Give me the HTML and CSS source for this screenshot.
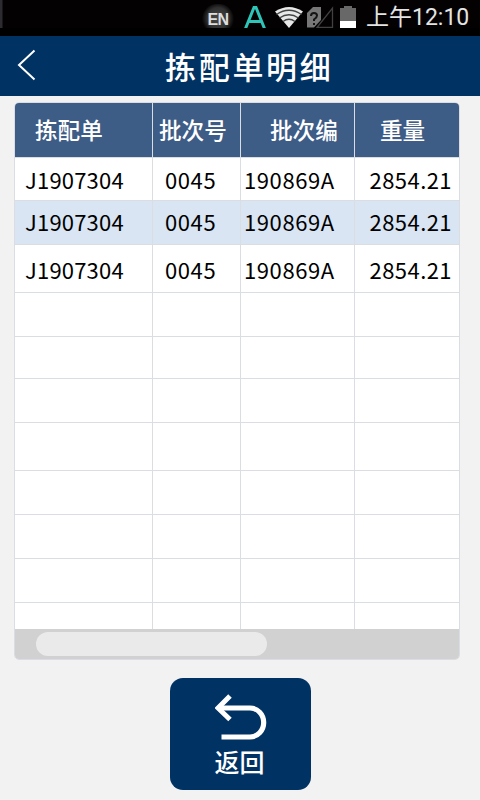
FILE: index.html
```html
<!DOCTYPE html>
<html lang="zh-CN">
<head>
<meta charset="utf-8">
<title>拣配单明细</title>
<link rel="stylesheet" href="styles.css">
</head>
<body>
<div class="status">
  <span class="lang">EN</span>
  <svg class="ime" width="22" height="22" viewBox="0 0 22 22"><path d="M1.500 22.500 10 1.500h2l8.500 21M5 15.500h12" fill="none" stroke="#2fc4b8" stroke-width="3"/></svg>
  <svg class="wifi" width="30" height="22" viewBox="0 0 30 22"><path d="M1 5.500Q15-3.500 29 5.500L15 22Z" fill="#e8e8e8"/><path d="M2.500 8.500Q15 0 27.500 8.500M5.500 12Q15 5.500 24.500 12M9 15.500Q15 11 21 15.500" fill="none" stroke="#444" stroke-width="1.400"/></svg>
  <svg class="sim" width="27" height="22" viewBox="0 0 27 22"><path d="M0 7 6 1h8v13L7 21.500H0Z" fill="#777"/><path d="M10 21.500 25.500 2v19.500Z" fill="none" stroke="#414141" stroke-width="1.300"/><path d="M4 10q0-3 3-3t3 2.500q0 2-3 4v1.500m0 2v2" fill="none" stroke="#151515" stroke-width="2"/></svg>
  <svg class="battery" width="16" height="22" viewBox="0 0 16 22"><path d="M0 2h4V0h8v2h4v13H0Z" fill="#686868"/><path d="M0 15h16v7H0Z" fill="#fff"/></svg>
  <span class="time">上午12:10</span>
</div>
<header class="title-bar">
  <svg class="back" width="19" height="32" viewBox="0 0 19 32"><path d="M17.500 1.500 2 16l15.500 14.500" fill="none" stroke="#fff" stroke-width="2"/></svg>
  <h1>拣配单明细</h1>
</header>
<main>
  <div class="table">
    <div class="row head"><span>拣配单</span><span>批次号</span><span>批次编</span><span>重量</span></div>
    <div class="row"><span>J1907304</span><span>0045</span><span>190869A</span><span>2854.21</span></div>
    <div class="row selected"><span>J1907304</span><span>0045</span><span>190869A</span><span>2854.21</span></div>
    <div class="row third"><span>J1907304</span><span>0045</span><span>190869A</span><span>2854.21</span></div>
    <div class="row"><span></span><span></span><span></span><span></span></div>
    <div class="row"><span></span><span></span><span></span><span></span></div>
    <div class="row"><span></span><span></span><span></span><span></span></div>
    <div class="row"><span></span><span></span><span></span><span></span></div>
    <div class="row"><span></span><span></span><span></span><span></span></div>
    <div class="row"><span></span><span></span><span></span><span></span></div>
    <div class="row"><span></span><span></span><span></span><span></span></div>
    <div class="row last"><span></span><span></span><span></span><span></span></div>
    <div class="scrollbar"><div class="thumb"></div></div>
  </div>
  <button class="return">
    <svg width="52" height="46" viewBox="0 0 52 46"><path d="M3 14H35a13.700 14.500 0 0 1 0 29H6.500" fill="none" stroke="#fff" stroke-width="5.200"/><path d="M15 2 3 14l12 11.500" fill="none" stroke="#fff" stroke-width="5"/></svg>
    <span>返回</span>
  </button>
</main>
</body>
</html>
```
FILE: styles.css
```css
* { box-sizing: border-box; }
body {
  margin: 0;
  width: 480px;
  height: 800px;
  overflow: hidden;
  background: #f2f2f2;
  font-family: "Noto Sans CJK SC", sans-serif;
}
.status {
  display: flex;
  align-items: flex-start;
  height: 36px;
  padding-left: 202px;
  background: linear-gradient(90deg, #2b2b30 2px, transparent 3px) 0 0 / 100% 28px no-repeat, #030102;
  border-bottom: 8px solid #000;
}
.status svg { flex: none; margin-top: 6px; }
.lang {
  width: 32px;
  height: 24px;
  margin-top: 4px;
  border-radius: 15px 15px 0 0;
  background: radial-gradient(circle at 50% 60%, #484848, #303030 50%, #030102 75%);
  color: #ddd;
  font: bold 16px/31px "Liberation Sans", sans-serif;
  letter-spacing: -0.5px;
  text-align: center;
}
.ime { margin-left: 10px; }
.wifi { margin-left: 8px; }
.sim { margin-left: 3px; }
.status .battery { margin-left: 6px; }
.time {
  margin-left: 10px;
  color: #e4e4e4;
  font: 23px/36px Roboto, "Noto Sans CJK SC", sans-serif;
  white-space: nowrap;
}
.title-bar {
  display: flex;
  align-items: center;
  height: 60px;
  background: #003263;
  color: #fff;
}
.back { margin: 0 0 3px 17px; }
h1 {
  margin: 0 0 0 129px;
  font: 500 31px/60px "Noto Sans CJK SC", sans-serif;
  letter-spacing: 2.7px;
}
main {
  display: flex;
  flex-direction: column;
  align-items: center;
  padding: 6px 20px 0 14px;
}
.table {
  width: 446px;
  height: 558px;
  border: 1px solid #dadee2;
  border-radius: 5px;
  overflow: hidden;
  background: #fff;
}
.row {
  display: grid;
  grid-template-columns: 138px 88px 114px 104px;
  height: 44px;
  border-bottom: 1px solid #dadee2;
  color: #000;
  font-size: 22px;
  line-height: 40px;
  letter-spacing: 0.6px;
  white-space: nowrap;
}
.row span { border-right: 1px solid #dadee2; }
.row span:last-child { border-right: 0; }
.row span:nth-child(1) { padding-left: 10px; letter-spacing: 0.2px; }
.row span:nth-child(2) { padding-left: 12px; }
.row span:nth-child(3) { padding-left: 3px; }
.row span:nth-child(4) { padding-left: 14.5px; letter-spacing: 0.45px; }
.row:nth-child(2) { height: 43px; line-height: 42px; }
.row.selected { background: #d9e5f3; }
.row.third, .row:nth-child(8) { height: 48px; line-height: 48px; }
.row:nth-child(6) { height: 42px; }
.row.last { height: 26px; border-bottom: 0; }
.row.head {
  height: 55px;
  background: #3d5c86;
  color: #fff;
  font: 500 22.600px/53px "Noto Sans CJK SC", sans-serif;
}
.row.head span { letter-spacing: 0; }
.row.head span:nth-child(1) { padding-left: 20px; }
.row.head span:nth-child(2) { padding-left: 6px; }
.row.head span:nth-child(3) { padding-left: 29px; }
.row.head span:nth-child(4) { padding-left: 25px; }
.scrollbar {
  height: 30px;
  padding: 3px 21px;
  background: #d1d1d1;
}
.thumb {
  width: 231px;
  height: 24px;
  border-radius: 12px;
  background: #eaeaea;
}
.return {
  display: flex;
  flex-direction: column;
  align-items: center;
  width: 141px;
  height: 112px;
  margin: 18px 0 0 7px;
  padding: 16px 0 0;
  border: 0;
  border-radius: 13px;
  background: #003263;
  color: #fff;
  font: 500 25px/36px "Noto Sans CJK SC", sans-serif;
}
.return svg { flex: none; }
.return span { margin: 3px 2px 0 0; }
```
